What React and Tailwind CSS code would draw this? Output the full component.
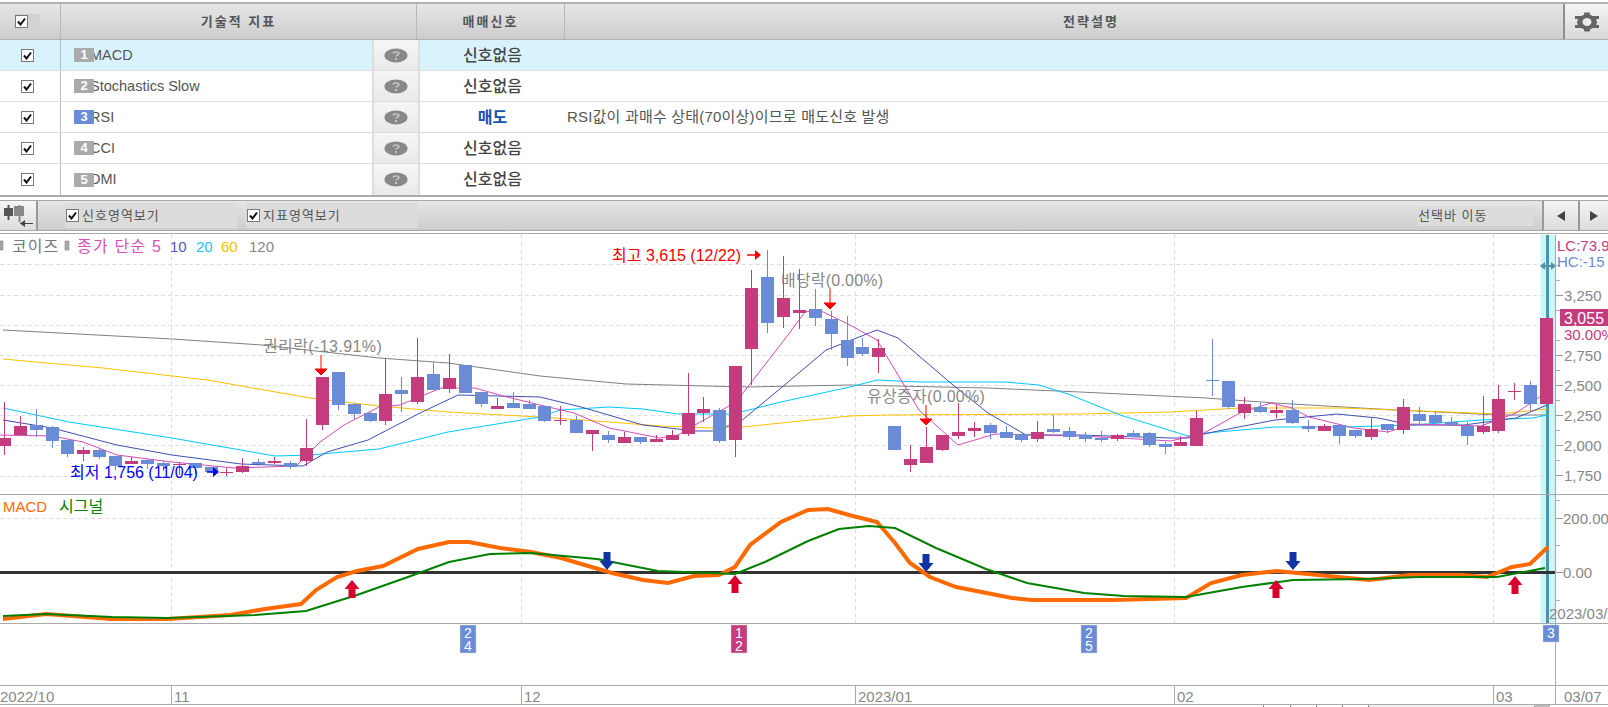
import React from 'react';

const PINK = '#c43b7e';
const BLUE = '#6a8cd6';

const rows = [
  { no: 1, name: 'MACD', signal: '신호없음', active: true },
  { no: 2, name: 'Stochastics Slow', signal: '신호없음' },
  { no: 3, name: 'RSI', signal: '매도', sell: true, desc: 'RSI값이 과매수 상태(70이상)이므로 매도신호 발생' },
  { no: 4, name: 'CCI', signal: '신호없음' },
  { no: 5, name: 'DMI', signal: '신호없음' },
];

// [p=상승 b=하락, 몸통위, 몸통아래, 꼬리위, 꼬리아래] (y = 225 + v/3)
const candles = [
  ['p',639,663,531,690],['p',603,630,573,630],['b',600,615,552,636],['b',606,648,603,669],['b',645,687,645,696],
  ['p',675,687,666,708],['b',675,696,669,702],['b',693,723,693,735],['p',708,717,696,717],['b',705,717,702,732],
  ['b',714,723,708,738],['p',717,719,711,750],['b',714,729,714,747],['b',726,741,726,744],['p',741,742,729,753],
  ['p',723,741,699,744],['b',711,717,702,723],['p',708,714,696,717],['b',714,726,708,732],['p',669,708,582,723],
  ['p',456,600,456,615],['b',441,540,441,555],['b',537,567,534,582],['b',564,588,561,591],['p',507,588,399,600],
  ['b',495,507,456,561],['p',456,531,339,537],['b',447,495,411,495],['p',459,492,387,504],['b',420,504,420,504],
  ['b',501,537,501,546],['p',543,552,519,552],['b',534,549,501,549],['b',537,552,525,552],
  ['b',543,587,543,591],['p',586,588,543,600],['b',585,624,572,624],['p',615,627,615,678],['b',630,645,618,654],
  ['p',636,654,622,654],['b',635,651,635,657],['p',641,651,630,651],['p',630,645,615,645],['p',564,627,444,633],
  ['p',552,564,516,591],['b',555,648,549,654],['p',423,645,423,696],['p',189,372,135,480],['b',156,294,75,324],
  ['p',219,276,93,309],['p',255,264,132,312],['b',252,279,192,303],['b',282,327,258,375],['b',345,399,273,423],
  ['b',366,387,339,393],['p',369,396,342,444],['b',603,675,603,675],['p',702,720,660,741],['p',666,714,606,714],
  ['p',630,675,630,678],['p',621,633,534,642],['p',609,618,591,636],['b',600,624,594,641],['b',621,639,603,639],
  ['b',627,645,627,651],['p',621,642,588,651],['b',612,621,570,624],['b',618,636,606,645],
  ['b',630,642,622,651],['b',639,645,618,651],['p',630,642,627,648],['b',624,636,615,636],['b',624,660,621,666],
  ['b',657,666,651,687],['p',651,663,633,663],['p',579,663,558,663],['b',465,467,342,513],['b',468,546,468,552],
  ['p',537,564,516,582],['b',546,561,534,564],['p',555,564,540,579],['b',555,594,525,597],['b',603,612,585,621],
  ['p',603,618,597,618],['b',600,633,600,657],['b',615,633,615,639],['p',612,636,579,645],['b',597,615,597,624],
  ['p',546,615,522,627],['b',567,588,546,600],['b',570,594,558,597],['b',591,601,576,601],['b',603,633,591,660],
  ['p',603,621,513,627],['p',522,618,480,624],['p',497,499,474,525],['b',480,537,468,558],['p',279,537,279,537],
];

const ma120 = '3,330 172,339 262,345 379,358 448,363 540,376 626,384 747,387 850,385 988,388 1080,392 1206,398 1275,403 1378,409 1498,415 1547,415';
const ma60 = '3,359 103,368 207,380 310,398 379,406 448,412 540,417 609,422 660,426 712,428 743,427 781,423 850,416 884,415 1080,414 1171,412 1240,408 1343,408 1447,412 1498,414 1547,409';
const ma20 = '3,408 69,422 172,438 275,456 310,455 344,452 379,449 448,432 540,417 560,410 609,407 643,409 678,414 733,414 781,402 850,387 877,380 919,382 1005,382 1039,385 1068,394 1120,415 1188,436 1206,433 1275,427 1343,427 1412,425 1481,420 1533,418 1547,415';
const ma10 = '3,420 52,428 117,445 172,455 241,464 303,466 327,452 368,440 420,413 458,395 540,397 581,407 643,425 695,431 712,431 740,422 781,388 826,350 877,330 898,338 953,385 988,413 1026,435 1080,435 1171,438 1188,438 1213,432 1275,420 1337,414 1378,418 1412,425 1464,425 1516,418 1547,405';
const ma5 = '0,435 52,436 83,442 117,455 172,462 234,468 296,466 320,442 344,425 379,407 400,405 441,388 475,388 503,396 540,405 574,413 609,428 660,438 678,435 695,425 736,402 788,335 805,312 819,310 850,325 877,340 919,410 958,445 995,434 1080,436 1120,438 1171,441 1204,433 1240,413 1271,403 1292,408 1309,417 1354,428 1388,432 1412,424 1481,426 1516,413 1547,392';
const macd = '3,619 46,614 112,619 168,619 230,615 265,609 301,604 316,590 337,577 357,571 383,566 418,549 449,542 469,542 500,548 531,552 561,558 612,573 643,580 668,583 694,576 719,575 735,567 750,545 781,522 808,510 828,509 849,515 877,522 895,543 910,563 930,577 956,587 1012,598 1032,600 1114,600 1186,598 1211,583 1242,575 1277,571 1318,575 1369,580 1410,575 1461,575 1487,577 1512,567 1530,564 1548,547';
const signal = '3,616 46,614 112,617 168,618 255,615 306,611 357,595 408,577 449,562 490,554 531,553 597,559 658,571 735,574 765,562 808,541 839,529 869,526 895,528 936,548 986,569 1027,583 1084,593 1124,596 1186,597 1242,587 1293,580 1364,579 1420,577 1497,577 1545,568';

const months = [
  { x: 171.5, label: '11' },
  { x: 521.5, label: '12' },
  { x: 855.5, label: '2023/01' },
  { x: 1174.5, label: '02' },
  { x: 1493.5, label: '03' },
];
const priceGrid = [264.5, 295.5, 325.5, 355.5, 385.5, 415.5, 445.5, 476.5];
const priceLabels = [
  ['3,250', 295], ['2,750', 355], ['2,500', 385], ['2,250', 415], ['2,000', 445], ['1,750', 475],
];

function Check({ className = '' }) {
  return (
    <span className={`flex h-[13px] w-[13px] items-center justify-center border border-[#777] bg-white ${className}`}>
      <svg width="9" height="9" viewBox="0 0 9 9">
        <path d="M1 4.5 L3.5 7.5 L8 1.5" fill="none" stroke="#111" strokeWidth="2" />
      </svg>
    </span>
  );
}

function HelpIcon() {
  return (
    <svg width="24" height="15" viewBox="0 0 24 15">
      <ellipse cx="12" cy="7.5" rx="11.5" ry="7" fill="#888" />
      <path d="M9 5.5 C9.5 3.5 14.5 3.5 15 5.5 C15 7 12.5 7 12 8.5" fill="none" stroke="#c4c4c4" strokeWidth="1.6" />
      <rect x="11" y="10" width="2" height="2" fill="#c4c4c4" />
    </svg>
  );
}

function Gear() {
  return (
    <svg width="26" height="20" viewBox="0 0 26 20">
      <rect x="10" y="0.5" width="6" height="19" rx="1" fill="#666" />
      <path d="M1 4 H7 V7 H1 Z M19 4 H25 V7 H19 Z M1 13 H7 V16 H1 Z M19 13 H25 V16 H19 Z" fill="#666" />
      <ellipse cx="13" cy="10" rx="10" ry="7.5" fill="#666" />
      <ellipse cx="13" cy="10" rx="4.5" ry="4" fill="#ececec" />
    </svg>
  );
}

function CandleTool() {
  return (
    <svg width="36" height="28" viewBox="0 0 36 28">
      <path d="M8.5 3 V18" stroke="#555" strokeWidth="2" />
      <rect x="4" y="6" width="9" height="8" fill="#555" />
      <path d="M19.5 3 V20" stroke="#888" strokeWidth="2" />
      <rect x="14" y="4" width="10" height="10" fill="#888" />
      <path d="M20 21.5 H33" stroke="#444" />
      <path d="M25 18 L20 21.5 L25 25 Z" fill="#444" />
    </svg>
  );
}

function Label({ x, y, color = '#888', size = 15, children, ...rest }) {
  return (
    <text x={x} y={y} fill={color} fontSize={size} dominantBaseline="central" {...rest}>
      {children}
    </text>
  );
}

function Badge({ x, y, h, color, lines }) {
  return (
    <g>
      <rect x={x} y={y} width="16" height={h} fill={color} stroke="#d8d4c8" strokeWidth="0.5" />
      {lines.map((t, i) => (
        <Label key={i} x={x + 8} y={y + 7.5 + i * 13.5} color="#fff" size={14} textAnchor="middle">{t}</Label>
      ))}
    </g>
  );
}

function UpArrow({ x, y }) {
  return <path d={`M${x} ${y} L${x + 7.5} ${y + 9} H${x + 3.5} V${y + 18} H${x - 3.5} V${y + 9} H${x - 7.5} Z`} fill="#d8002c" />;
}

function DownArrow({ x, y }) {
  return <path d={`M${x} ${y + 18} L${x + 7.5} ${y + 9} H${x + 3.5} V${y} H${x - 3.5} V${y + 9} H${x - 7.5} Z`} fill="#1034a6" />;
}

function RedMark({ x, y }) {
  return <path d={`M${x} ${y} V${y + 15} M${x - 6} ${y + 14} H${x + 6} L${x} ${y + 20} Z`} stroke="#f00" fill="#f00" />;
}

function Chart() {
  return (
    <svg className="block" width="1608" height="473" viewBox="0 234 1608 473">
      {/* 선택바 */}
      <rect x="1540.5" y="235" width="15" height="388" fill="#ccf5f5" />

      {priceGrid.map((y) => (
        <path key={y} d={`M0 ${y} H1555`} stroke="#dedede" strokeDasharray="4 3" />
      ))}
      <path d="M0 518.5 H1555" stroke="#dedede" strokeDasharray="4 3" />
      {months.map((m) => (
        <path key={m.x} d={`M${m.x} 235 V623`} stroke="#dedede" strokeDasharray="4 3" />
      ))}

      <rect x="1546" y="235" width="3" height="388" fill="#4a94ae" />

      <g fill="none" strokeWidth="1">
        <polyline points={ma120} stroke="#808080" />
        <polyline points={ma60} stroke="#ffc000" />
        <polyline points={ma20} stroke="#00c8ff" />
        <polyline points={ma10} stroke="#4050b0" />
        <polyline points={ma5} stroke="#d44ab8" />
      </g>

      <g shapeRendering="crispEdges">
        {candles.map(([t, top, bot, wt, wb], i) => {
          const x = Math.round(3.8 + 15.9 * i);
          const color = t === 'p' ? PINK : BLUE;
          return (
            <g key={i}>
              <rect x={x} y={225 + wt / 3} width="1" height={(wb - wt) / 3} fill={color} />
              <rect x={x - 6} y={225 + top / 3} width="13" height={Math.max(1, (bot - top) / 3)} fill={color} />
            </g>
          );
        })}
      </g>

      {/* 범례 */}
      <rect x="0" y="241" width="3" height="9" fill="#aaa" stroke="#777" strokeWidth="0.5" />
      <Label x="12" y="246" size={16} color="#777" letterSpacing="1">코이즈</Label>
      <rect x="65" y="241" width="4" height="9" fill="#aaa" stroke="#777" strokeWidth="0.5" />
      <Label x="77" y="246" size={16} color="#d94fb5" letterSpacing="1.2">종가 단순 5</Label>
      <Label x="170" y="246" color="#4a5cc0">10</Label>
      <Label x="196" y="246" color="#18c4ff">20</Label>
      <Label x="221" y="246" color="#ffc000">60</Label>
      <Label x="249" y="246" color="#888">120</Label>

      {/* 주석 */}
      <Label x="70" y="472" size={16} color="#0000ff">최저 1,756 (11/04)</Label>
      <path d="M207 472 H214" stroke="#00f" strokeWidth="1.5" />
      <path d="M213 467 L219 472 L213 477 Z" fill="#00f" />
      <Label x="612" y="255" size={16} color="#f00">최고 3,615 (12/22)</Label>
      <path d="M747 255 H756" stroke="#f00" strokeWidth="1.5" />
      <path d="M755 250 L761 255 L755 260 Z" fill="#f00" />
      <Label x="263" y="346" size={16} letterSpacing="0.4">권리락(-13.91%)</Label>
      <Label x="781" y="280" size={16} letterSpacing="0.2">배당락(0.00%)</Label>
      <Label x="867" y="396" size={16} letterSpacing="0.3">유상증자(0.00%)</Label>
      <RedMark x={321} y={355} />
      <RedMark x={830} y={289} />
      <RedMark x={926} y={405} />

      {/* 선택바 손잡이 */}
      <path d="M1540 266 L1545 262 V270 Z M1556 266 L1551 262 V270 Z" fill="#4a94ae" />
      <path d="M1543 266 H1553" stroke="#4a94ae" strokeWidth="2" />

      {/* 가격축 */}
      <path d="M1555.5 235 V704" stroke="#aaa" />
      {priceLabels.map(([t, y]) => (
        <g key={t}>
          <path d={`M1556 ${y + 0.5} H1563`} stroke="#999" />
          <Label x="1564" y={y} color="#888">{t}</Label>
        </g>
      ))}
      {[265, 280, 310, 340, 370, 400, 430, 460].map((y) => (
        <path key={y} d={`M1556 ${y + 0.5} H1560`} stroke="#aaa" />
      ))}
      <Label x="1557" y="245" color={PINK}>LC:73.9</Label>
      <Label x="1557" y="261" color={BLUE}>HC:-15</Label>
      <rect x="1560" y="309" width="48" height="17" fill={PINK} />
      <Label x="1564" y="318" size={16} color="#fff">3,055</Label>
      <Label x="1564" y="334" color={PINK}>30.00%</Label>

      {/* MACD 영역 */}
      <path d="M0 494.5 H1608" stroke="#aaa" />
      <Label x="3" y="506" color="#ff6a00">MACD</Label>
      <Label x="59" y="506" size={16} color="#008000">시그널</Label>
      <path d="M0 572.5 H1555" stroke="#333" strokeWidth="3" />
      <polyline points={macd} fill="none" stroke="#ff6a00" strokeWidth="4" />
      <polyline points={signal} fill="none" stroke="#008000" strokeWidth="2" />
      <UpArrow x={352} y={580} />
      <UpArrow x={735} y={575} />
      <UpArrow x={1276} y={580} />
      <UpArrow x={1515} y={576} />
      <DownArrow x={607} y={552} />
      <DownArrow x={926} y={554} />
      <DownArrow x={1293} y={552} />
      <path d="M1556 518.5 H1563 M1556 572.5 H1563" stroke="#999" />
      {[500, 545, 600].map((y) => (
        <path key={y} d={`M1556 ${y + 0.5} H1560`} stroke="#aaa" />
      ))}
      <Label x="1563" y="518">200.00</Label>
      <Label x="1563" y="572">0.00</Label>
      <Label x="1549" y="613">2023/03/</Label>

      {/* 이벤트 영역 */}
      <path d="M0 623.5 H1608" stroke="#aaa" />
      <Badge x={460} y={625} h={28} color={BLUE} lines={['2', '4']} />
      <Badge x={731} y={625} h={28} color={PINK} lines={['1', '2']} />
      <Badge x={1081} y={625} h={28} color={BLUE} lines={['2', '5']} />
      <Badge x={1543} y={625} h={17} color={BLUE} lines={['3']} />

      {/* 시간축 */}
      <path d="M0 685.5 H1608 M0 704.5 H1608" stroke="#aaa" />
      <Label x="0" y="696">2022/10</Label>
      {months.map((m) => (
        <g key={m.label}>
          <path d={`M${m.x} 686 V704`} stroke="#aaa" />
          <Label x={m.x + 2.5} y="696">{m.label}</Label>
        </g>
      ))}
      <Label x="1564" y="696">03/07</Label>
      <path d="M1263.5 705 V707 M1290.5 705 V707 M1316.5 705 V707 M1342.5 705 V707 M1368.5 705 V707" stroke="#888" />
      <rect x="1369" y="705" width="165" height="2" fill="#f0f0f0" />
      <rect x="1534" y="705" width="16" height="2" fill="#bbb" />
    </svg>
  );
}

export default function App() {
  return (
    <div className="h-[707px] w-[1608px] overflow-hidden bg-white [font-family:'Liberation_Sans','Noto_Sans_CJK_KR',sans-serif]">
      <div className="h-[2px]" />

      {/* 헤더 */}
      <div className="flex h-[38px] border-t-2 border-b border-[#b0b0b0] bg-gradient-to-b from-[#e6e6e6] to-[#cdcdcd] text-[13px] font-bold tracking-[2px] text-[#555]">
        <div className="flex w-[61px] shrink-0 items-center justify-start border-r border-[#b8b8b8] pl-[15px]">
          <span className="flex h-[16px] w-[25px] items-center bg-[#d2d2d2]"><Check /></span>
        </div>
        <div className="flex w-[356px] shrink-0 items-center justify-center border-r border-[#b8b8b8]">기술적 지표</div>
        <div className="flex w-[148px] shrink-0 items-center justify-center border-r border-[#b8b8b8]">매매신호</div>
        <div className="flex flex-1 items-center justify-center pl-[54px]">전략설명</div>
        <div className="flex w-[45px] items-center justify-center border-l-2 border-[#8e8e8e] bg-gradient-to-b from-[#f4f4f4] to-[#d8d8d8]"><Gear /></div>
      </div>

      {/* 지표 목록 */}
      <div className="border-b-2 border-[#aaa]">
        {rows.map((r) => (
          <div key={r.no} className={`flex h-[31px] border-b border-[#ddd] last:border-b-0 ${r.active ? 'bg-[#d9f3fe]' : 'bg-white'}`}>
            <div className="flex w-[61px] shrink-0 items-center border-r border-[#bbb] pl-[21px]"><Check /></div>
            <div className="flex w-[311px] shrink-0 items-center pl-[13px] text-[14.5px] text-[#555]">
              <span className={`relative z-10 flex h-[14px] w-[20px] shrink-0 items-center justify-center text-[13px] font-bold text-white ${r.sell ? 'bg-[#6a8cd6]' : 'bg-[#aaa]'}`}>{r.no}</span>
              <span className="-ml-[4px] pt-px">{r.name}</span>
            </div>
            <div className="flex w-[48px] shrink-0 items-center justify-center border-x-2 border-[#dedede] bg-gradient-to-b from-[#f6f6f6] to-[#e9e9e9]"><HelpIcon /></div>
            <div className={`flex w-[145px] shrink-0 items-center justify-center pt-px text-[16px] ${r.sell ? 'font-bold text-[#1a4fb5]' : 'font-medium text-[#444]'}`}>{r.signal}</div>
            <div className="flex flex-1 items-center pl-[2px] pt-px text-[15px] tracking-[0.2px] text-[#555]">{r.desc}</div>
          </div>
        ))}
      </div>

      <div className="h-[3px]" />

      {/* 도구 막대 */}
      <div className="flex h-[31px] items-center border-y border-[#a8a8a8] bg-gradient-to-b from-[#e6e6e6] to-[#cdcdcd] text-[13px] tracking-[1px] text-[#555]">
        <div className="flex h-full w-[38px] items-center justify-center border-r-2 border-[#999] bg-gradient-to-b from-[#f6f6f6] to-[#dcdcdc]"><CandleTool /></div>
        <label className="ml-[27px] flex h-[25px] w-[172px] items-center gap-[3px] bg-[#dcdcdc] pl-px"><Check />신호영역보기</label>
        <label className="ml-[9px] flex h-[25px] w-[172px] items-center gap-[3px] bg-[#dcdcdc] pl-px"><Check />지표영역보기</label>
        <div className="ml-auto flex h-[20px] w-[116px] items-center bg-[#dcdcdc] pl-px">선택바 이동</div>
        <div className="ml-[9px] flex h-full w-[38px] items-center justify-center border-x-2 border-[#999] bg-gradient-to-b from-[#f4f4f4] to-[#dcdcdc]">
          <span className="h-0 w-0 border-y-[5px] border-r-[8px] border-y-transparent border-r-[#444]" />
        </div>
        <div className="flex h-full w-[28px] items-center justify-center bg-gradient-to-b from-[#f4f4f4] to-[#dcdcdc]">
          <span className="h-0 w-0 border-y-[5px] border-l-[8px] border-y-transparent border-l-[#444]" />
        </div>
      </div>

      <div className="h-[2px]" />
      <div className="h-px bg-[#aaa]" />
      <Chart />
    </div>
  );
}
